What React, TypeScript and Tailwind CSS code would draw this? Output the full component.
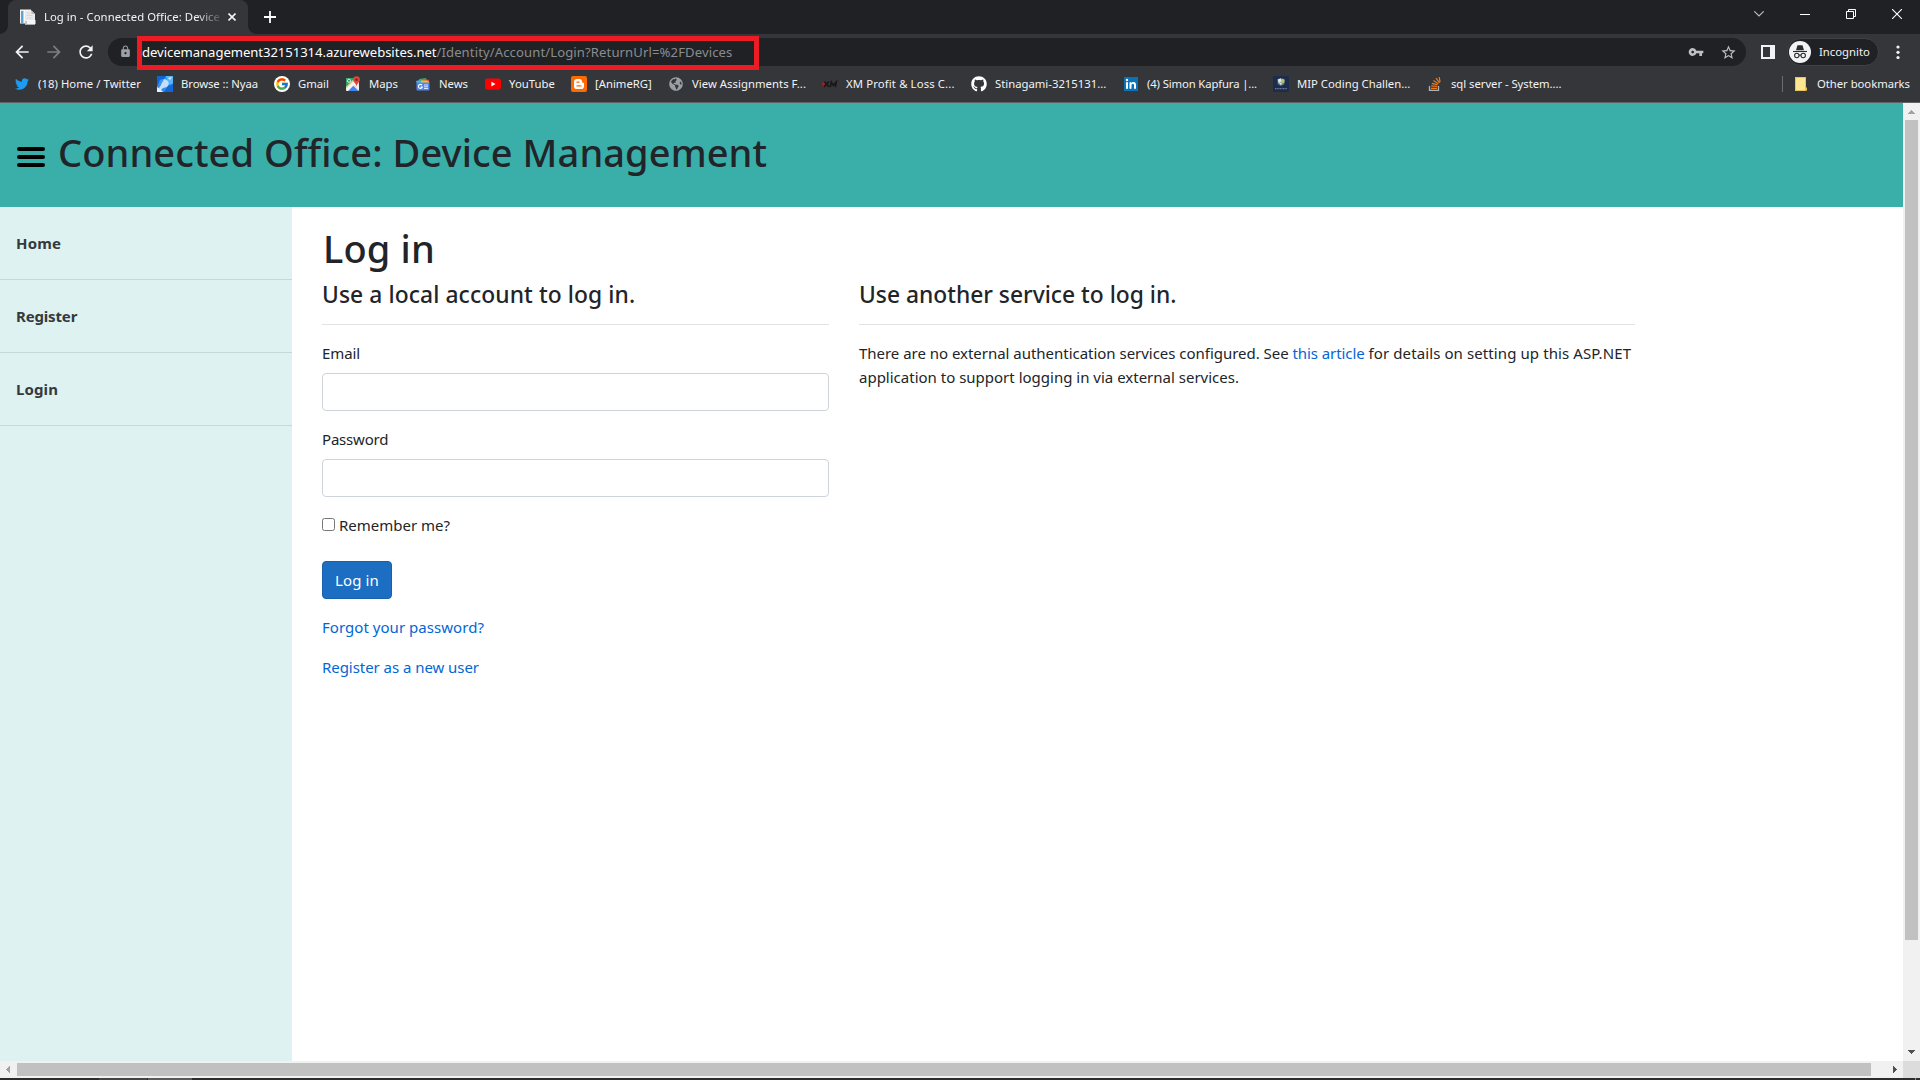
import type { ReactNode } from "react";
import {
  MdArrowBack,
  MdArrowForward,
  MdLock,
  MdRefresh,
  MdStarBorder,
  MdVpnKey,
} from "react-icons/md";
import { FaGithub, FaGlobeAmericas, FaTwitter } from "react-icons/fa";
import { FcGoogle } from "react-icons/fc";

function DocsIcon() {
  return (
    <svg width="16" height="16" viewBox="0 0 16 16">
      <rect x="0" y="0.5" width="11" height="14" fill="#f1f1f1" />
      <rect x="1" y="2" width="2.4" height="12" fill="#5fa3d0" />
      <rect x="4.5" y="1" width="5.5" height="13" fill="#ffffff" />
      <path d="M5 1.5h6.5L15 5v10.5H5z" fill="#e9eaec" />
      <path d="M5 12h10v3.5H5z" fill="#c4c7ca" />
      <path d="M7 11h8.5v4H7z" fill="#f5f5f5" />
      <path d="M11.500 1.500 15 5h-3.500z" fill="#b9bdc1" />
      <path d="M6.500 4h4M6.500 6.500h6M6.500 9h6" stroke="#cfd3d6" strokeWidth="0.8" />
    </svg>
  );
}

function NyaaIcon() {
  return (
    <svg width="16" height="16" viewBox="0 0 16 16">
      <rect width="16" height="16" fill="#2f8df0" />
      <path d="M0 0h9L7 3 3 4 1 9 0 10z" fill="#0d66d8" />
      <path d="M9 0h7v7l-3 2-3-5z" fill="#55b5f7" />
      <path d="M5 4 8 3l3 2 1 3-2 3-4 1-3 3-1-3 2-3z" fill="#c4dffb" />
      <path d="M3 4 7 3 5 7 1 10z" fill="#3d93ec" />
      <path d="M0 16v-5l3 2 3 3z" fill="#e3f0ff" />
      <path d="M11 10l5-2v8H7z" fill="#1168dc" />
      <path d="M11 2l4-1-2 3z" fill="#d4edff" />
    </svg>
  );
}

function GoogleIcon() {
  return (
    <span className="flex size-4 items-center justify-center rounded-full bg-white">
      <FcGoogle size={14} />
    </span>
  );
}

function MapsIcon() {
  return (
    <svg width="16" height="16" viewBox="0 0 16 16">
      <rect x="1" y="2" width="13" height="13" rx="1" fill="#e5e3df" />
      <path d="M1 3a1 1 0 0 1 1-1h8L1 11z" fill="#34a066" />
      <path d="M2.500 15L8 9.500 13.500 15z" fill="#4285f4" />
      <path d="M1 11.500 10 2.500l1.500 2L2 14.500z" fill="#f6d14a" />
      <path d="M1 12.800 9 5l5 5v4L9.500 8.500 3 15H2z" fill="#f4f4f4" />
      <circle cx="4" cy="4.800" r="1.600" fill="none" stroke="#e8f5ec" strokeWidth="0.9" />
      <path d="M11.500 0.300a3.400 3.400 0 0 1 3.400 3.400c0 2.500-2.900 3.300-3.400 6.800-.5-3.500-3.400-4.300-3.400-6.800A3.400 3.400 0 0 1 11.500.3z" fill="#e0443a" />
      <circle cx="11.500" cy="3.700" r="1.200" fill="#7d1f1a" />
    </svg>
  );
}

function NewsIcon() {
  return (
    <svg width="16" height="16" viewBox="0 0 16 16">
      <path d="M4 3 11 2l1 5H4z" fill="#3fa65a" />
      <path d="M10 3l4 1L13.500 8H8z" fill="#e94a3c" />
      <path d="M1 5 5 4l2 3-5 1z" fill="#4cb2e8" />
      <path d="M6 4.500h6l2.500 1.500-1 2H6z" fill="#f4bd2c" />
      <rect x="1.500" y="6.500" width="13" height="8" rx="1" fill="#4d86ee" />
      <path d="M7 9.200A2 2 0 1 0 7.300 11H5.600" fill="none" stroke="#fff" strokeWidth="1.100" />
      <path d="M9 9h4M9 10.800h4M9 12.500h4" stroke="#e8f0fe" strokeWidth="0.900" />
    </svg>
  );
}

function YouTubeIcon() {
  return (
    <svg width="16" height="16" viewBox="0 0 16 16">
      <rect x="0" y="2.500" width="16" height="11.200" rx="2.600" fill="#f00" />
      <path d="M6.400 5.700v4.800l4.100-2.400z" fill="#fff" />
    </svg>
  );
}

function BloggerIcon() {
  return (
    <svg width="16" height="16" viewBox="0 0 16 16">
      <rect width="16" height="16" rx="2" fill="#ff6a00" />
      <path
        d="M6 3h2.500A2.500 2.500 0 0 1 11 5.500c0 1 .4 1.300 1.200 1.300.5 0 .8.300.8.800v2.600A2.800 2.800 0 0 1 10.200 13H5.800A2.800 2.800 0 0 1 3 10.200V6a3 3 0 0 1 3-3z"
        fill="#fff"
      />
      <path d="M6 6.200h2M6 9.900h4" stroke="#ff6a00" strokeWidth="1.300" strokeLinecap="round" />
    </svg>
  );
}

function XmIcon() {
  return (
    <svg width="16" height="16" viewBox="0 0 16 16">
      <path d="M0.500 5.500 3 8 .5 11z" fill="#c4161c" />
      <path d="M2.500 5.500 7 11M7 5.500 2 11" stroke="#1a1516" strokeWidth="1.600" />
      <path d="M8.300 11 9.300 6l2 3.300L14.300 6l-1 5" stroke="#1a1516" strokeWidth="1.600" fill="none" />
    </svg>
  );
}

function LinkedInIcon() {
  return (
    <svg width="14" height="14" viewBox="0 0 14 14">
      <rect width="14" height="14" fill="#0a73b8" />
      <rect x="2" y="5.200" width="2" height="6.600" fill="#fff" />
      <circle cx="3" cy="3" r="1.200" fill="#fff" />
      <path
        d="M5.500 5.200h1.900v.9c.4-.6 1-1.050 2-1.050 1.900 0 2.600 1.150 2.600 3.050v3.700h-2V8.500c0-.9-.2-1.700-1.200-1.700s-1.300.7-1.300 1.700v3.300h-2z"
        fill="#fff"
      />
    </svg>
  );
}

function MipIcon() {
  return (
    <svg width="16" height="16" viewBox="0 0 16 16">
      <rect width="16" height="16" rx="1" fill="#1d2c4c" />
      <circle cx="8" cy="6" r="3.600" fill="#5c7a8c" />
      <path d="M4.500 3.500 8 2.200l1 3-3 2.300z" fill="#dfe6dc" />
      <path d="M9 2.500l2.800 1.200-.8 3.300-2.500.5z" fill="#b2c06a" />
      <path d="M6.500 7 9 6.800 8 9.800z" fill="#d9e2e4" />
      <path d="M2 12.700h12" stroke="#6f7c93" strokeWidth="1.200" strokeDasharray="1.100 0.500" />
    </svg>
  );
}

function StackOverflowIcon() {
  return (
    <svg width="14" height="16" viewBox="0 0 14 16">
      <path d="M1.500 10v4.300h9V10" fill="none" stroke="#b0b3b6" strokeWidth="1.300" />
      <path
        d="M3 12.300h6M3.200 9.900l5.900.6M3.900 7.300l5.700 1.600M5.400 4.600l5 3.100M8 2.200l3.500 4.700M11.200 1l.9 5.200"
        stroke="#ee7a1e"
        strokeWidth="1.200"
        fill="none"
      />
    </svg>
  );
}

function FolderIcon() {
  return (
    <svg width="12" height="14" viewBox="0 0 12 14">
      <rect x="0.400" y="0.400" width="10.200" height="13.200" fill="#ffe58f" stroke="#f3cf57" strokeWidth="0.800" />
      <path d="M10 10.500h2v3l-2 .5z" fill="#f0c544" />
    </svg>
  );
}

function IncognitoIcon() {
  return (
    <svg width="22" height="22" viewBox="0 0 22 22">
      <circle cx="11" cy="11" r="11" fill="#f1f3f4" />
      <path d="M8.500 4.200h5l1.500 5H7z" fill="#2b2c2f" />
      <path d="M4 10.500h14" stroke="#2b2c2f" strokeWidth="1.100" />
      <circle cx="7.800" cy="14.500" r="2.200" fill="none" stroke="#2b2c2f" strokeWidth="1.100" />
      <circle cx="14.200" cy="14.500" r="2.200" fill="none" stroke="#2b2c2f" strokeWidth="1.100" />
      <path d="M10 14.300q1-.7 2 0" fill="none" stroke="#2b2c2f" strokeWidth="1" />
    </svg>
  );
}

function TabStrip() {
  return (
    <div className="flex h-[34px] bg-[#202124]">
      <div className="size-2 self-end bg-[radial-gradient(circle_at_0_0,transparent_7.5px,#35363a_8px)]" />
      <div className="flex w-[240px] items-center rounded-t-lg bg-[#35363a] pl-3">
        <DocsIcon />
        <div className="ml-2 w-[176px] overflow-hidden whitespace-nowrap text-[11.3px] tracking-[0.054px] text-[#f1f3f4] [mask-image:linear-gradient(to_right,#000_152px,transparent_180px)]">
          Log in - Connected Office: Device
        </div>
        <svg className="ml-2" width="8" height="8" viewBox="0 0 8 8" stroke="#f1f3f4" strokeWidth="1.600">
          <path d="M0.500.5l7 7M7.500.5l-7 7" />
        </svg>
      </div>
      <div className="size-2 self-end bg-[radial-gradient(circle_at_100%_0,transparent_7.5px,#35363a_8px)]" />
      <svg className="ml-2 self-center" width="12" height="12" viewBox="0 0 12 12" stroke="#fff" strokeWidth="1.800">
        <path d="M6 0v12M0 6h12" />
      </svg>
      <div className="ml-auto flex items-start pr-[18px]">
        <svg className="mt-[11px]" width="10" height="6" viewBox="0 0 10 6" fill="none" stroke="#bdbec0" strokeWidth="1.100">
          <path d="M0.300.3 5 5 9.700.3" />
        </svg>
        <svg className="ml-9 mt-[14px]" width="10" height="1">
          <rect width="10" height="1" fill="#fff" />
        </svg>
        <svg className="ml-9 mt-[9px]" width="10" height="10" viewBox="0 0 10 10" fill="none" stroke="#fff">
          <path d="M0.500 2.500h7v7h-7zM2.500 2.500v-2h7v7h-2" />
        </svg>
        <svg className="ml-9 mt-[9px]" width="10" height="10" viewBox="0 0 10 10" stroke="#fff" strokeWidth="1.100">
          <path d="M0 0l10 10M10 0L0 10" />
        </svg>
      </div>
    </div>
  );
}

function Toolbar() {
  return (
    <div className="flex h-9 items-center bg-[#35363a]">
      <MdArrowBack className="ml-3 text-[#f1f3f4]" size={20} />
      <MdArrowForward className="ml-3 text-[#7d7e81]" size={20} />
      <MdRefresh className="ml-3 text-[#f1f3f4]" size={20} />
      <div className="relative ml-3 flex h-7 w-[1638px] items-center rounded-full bg-[#202124] pl-[11px] pr-[9px]">
        <MdLock className="-mt-px text-[#9aa0a6]" size={13} />
        <div className="ml-2.5 whitespace-nowrap text-[13.1px]">
          <span className="tracking-[-0.05px] text-white">devicemanagement32151314.azurewebsites.net</span>
          <span className="tracking-[0.105px] text-[#8a8c8f]">/Identity/Account/Login?ReturnUrl=%2FDevices</span>
        </div>
        <MdVpnKey className="ml-auto text-[#bdc1c6]" size={16} />
        <MdStarBorder className="ml-4 text-[#bdc1c6]" size={17} />
        <div className="absolute -top-0.5 left-[29px] h-[34px] w-[622px] border-[5px] border-[#ed1c24]" />
      </div>
      <svg className="ml-[15px]" width="14" height="14" viewBox="0 0 14 14">
        <path d="M0 0h14v14H0zM2 2v10h7V2z" fill="#f1f3f4" fillRule="evenodd" />
      </svg>
      <div className="ml-3 flex h-7 w-[92px] items-center rounded-full border border-[#404145] bg-[#202124] pl-px">
        <IncognitoIcon />
        <span className="ml-2 text-[11.3px] text-[#f1f3f4]">Incognito</span>
      </div>
      <svg className="ml-[17px]" width="4" height="14" viewBox="0 0 4 14" fill="#f1f3f4">
        <circle cx="2" cy="2" r="1.600" />
        <circle cx="2" cy="7.300" r="1.600" />
        <circle cx="2" cy="12.500" r="1.600" />
      </svg>
    </div>
  );
}

interface Bookmark {
  label: string;
  icon: ReactNode;
  className: string;
}

const bookmarks: Bookmark[] = [
  { label: "(18) Home / Twitter", icon: <FaTwitter size={14} color="#1d9bf0" />, className: "w-[143px] tracking-[0.058px]" },
  { label: "Browse :: Nyaa", icon: <NyaaIcon />, className: "w-[117px] tracking-[-0.07px]" },
  { label: "Gmail", icon: <GoogleIcon />, className: "w-[71px]" },
  { label: "Maps", icon: <MapsIcon />, className: "w-[70px]" },
  { label: "News", icon: <NewsIcon />, className: "w-[70px]" },
  { label: "YouTube", icon: <YouTubeIcon />, className: "w-[86px] tracking-[0.047px]" },
  { label: "[AnimeRG]", icon: <BloggerIcon />, className: "w-[97px]" },
  { label: "View Assignments F...", icon: <FaGlobeAmericas size={14} color="#9aa0a6" />, className: "w-[154px] tracking-[0.04px]" },
  { label: "XM Profit & Loss C...", icon: <XmIcon />, className: "w-[149px] tracking-[0.14px]" },
  { label: "Stinagami-3215131...", icon: <FaGithub size={16} color="#fff" />, className: "w-[152px]" },
  { label: "(4) Simon Kapfura |...", icon: <LinkedInIcon />, className: "w-[150px] tracking-[-0.126px]" },
  { label: "MIP Coding Challen...", icon: <MipIcon />, className: "w-[154px]" },
  { label: "sql server - System....", icon: <StackOverflowIcon />, className: "w-[150px] tracking-[-0.04px]" },
];

function BookmarkBar() {
  return (
    <div className="flex h-8 items-center bg-[#35363a] pb-1 pl-3.5 pr-[10px] text-[11.3px] text-[#f1f3f4]">
      {bookmarks.map((b) => (
        <div key={b.label} className={"flex shrink-0 items-center whitespace-nowrap " + b.className}>
          <span className="mr-2 flex w-4 justify-center">{b.icon}</span>
          {b.label}
        </div>
      ))}
      <div className="ml-auto h-4 w-px bg-[#6b6c70]" />
      <div className="ml-3 flex items-center">
        <FolderIcon />
        <span className="ml-2.5 whitespace-nowrap tracking-[-0.035px]">Other bookmarks</span>
      </div>
    </div>
  );
}

function SideNav() {
  return (
    <nav className="w-[292px] shrink-0 bg-[#def2f1] text-[15px] font-bold text-[#35393d]">
      <a className="block border-b border-[#c4dad9] px-4 py-6 tracking-[0.2px]">Home</a>
      <a className="block border-b border-[#c4dad9] px-4 py-6 tracking-[-0.16px]">Register</a>
      <a className="block border-b border-[#c4dad9] px-4 py-6 tracking-[0.1px]">Login</a>
    </nav>
  );
}

function Login() {
  return (
    <main className="grow px-[30px] pt-[17px] text-[15px] text-[#212529]">
      <h1 className="pl-px text-[38px] font-medium leading-[48px] tracking-[0.15px]">Log in</h1>
      <div className="mt-[9px] flex gap-[30px]">
        <section className="w-[507px]">
          <h3 className="text-[22.8px] font-medium leading-7 tracking-[0.1px]">Use a local account to log in.</h3>
          <hr className="mb-4 mt-[15px] border-[#e2e3e3]" />
          <label className="block tracking-[-0.1px]">Email</label>
          <div className="mt-2 h-[38px] rounded border border-[#ced4da] bg-white" />
          <label className="mt-4 block tracking-[-0.2px]">Password</label>
          <div className="mt-2 h-[38px] rounded border border-[#ced4da] bg-white" />
          <label className="mt-4 flex">
            <span className="mr-1 mt-[5px] size-[13px] rounded-[2.5px] border border-[#767676] bg-white" />
            Remember me?
          </label>
          <button className="mt-6 block h-[38px] w-[70px] rounded border border-[#1861ac] bg-[#1b6ec2] text-center tracking-[0.13px] text-white">
            Log in
          </button>
          <a className="mt-4 block tracking-[0.04px] text-[#0366d6]">Forgot your password?</a>
          <a className="mt-4 block tracking-[-0.05px] text-[#0366d6]">Register as a new user</a>
        </section>
        <section className="w-[776px]">
          <h3 className="text-[22.8px] font-medium leading-7">Use another service to log in.</h3>
          <hr className="mb-4 mt-[15px] border-[#e2e3e3]" />
          <p className="whitespace-nowrap">
            <span className="tracking-[-0.025px]">There are no external authentication services configured. See </span>
            <a className="tracking-[-0.09px] text-[#0366d6]">this article</a>
            <span className="tracking-[0.1px]"> for details on setting up this ASP.NET</span>
            <br />
            application to support logging in via external services.
          </p>
        </section>
      </div>
    </main>
  );
}

function VerticalScrollbar() {
  return (
    <div className="flex h-full w-[17px] shrink-0 flex-col items-center bg-[#f1f1f1]">
      <svg width="17" height="17" viewBox="0 0 17 17" fill="#a3a3a3" shapeRendering="crispEdges">
        <path d="M8 7h1v1h1v1h1v1h1v1H5v-1h1V9h1V8h1z" />
      </svg>
      <div className="h-[820px] w-[13px] bg-[#c1c1c1]" />
      <svg className="mt-auto" width="17" height="17" viewBox="0 0 17 17" fill="#505050" shapeRendering="crispEdges">
        <path d="M5 6h7v1h-1v1h-1v1H9v1H8V9H7V8H6V7H5z" />
      </svg>
    </div>
  );
}

function HorizontalScrollbar() {
  return (
    <div className="flex h-[17px] items-center bg-[#f1f1f1]">
      <svg width="17" height="17" viewBox="0 0 17 17" fill="#a3a3a3" shapeRendering="crispEdges">
        <path d="M10 5v7H9v-1H8v-1H7V9H6V8h1V7h1V6h1V5z" />
      </svg>
      <div className="h-[13px] w-[1854px] bg-[#c1c1c1]" />
      <svg className="ml-auto" width="17" height="17" viewBox="0 0 17 17" fill="#505050" shapeRendering="crispEdges">
        <path d="M7 5v7h1v-1h1v-1h1V9h1V8h-1V7H9V6H8V5z" />
      </svg>
      <div className="h-full w-[17px] bg-[#dcdcdc]" />
    </div>
  );
}

export default function App() {
  return (
    <div className="flex h-[1080px] w-[1920px] flex-col overflow-hidden bg-white font-['Noto_Sans',sans-serif] leading-6">
      <TabStrip />
      <Toolbar />
      <BookmarkBar />
      <div className="h-px bg-[#5f6164]" />
      <div className="flex h-[958px]">
        <div className="flex grow flex-col">
          <header className="flex h-[104px] shrink-0 bg-[#3aafa9] pl-[17px] pt-[25px]">
            <div className="mt-[19px] flex w-7 flex-col gap-1">
              <div className="h-1 rounded-full bg-black" />
              <div className="h-1 rounded-full bg-black" />
              <div className="h-1 rounded-full bg-black" />
            </div>
            <h1 className="ml-[13px] text-[38px] font-medium leading-[48px] tracking-[0.08px] text-[#212529]">
              Connected Office: Device Management
            </h1>
          </header>
          <div className="flex grow">
            <SideNav />
            <Login />
          </div>
        </div>
        <VerticalScrollbar />
      </div>
      <HorizontalScrollbar />
      <div className="flex h-0.5 bg-[#2d2b2e]">
        <div className="ml-[99px] w-12 bg-[#444346]" />
        <div className="ml-px w-11 bg-[#5b5a5c]" />
        <div className="ml-auto mr-1 w-px bg-[#8a8a8a]" />
      </div>
    </div>
  );
}
